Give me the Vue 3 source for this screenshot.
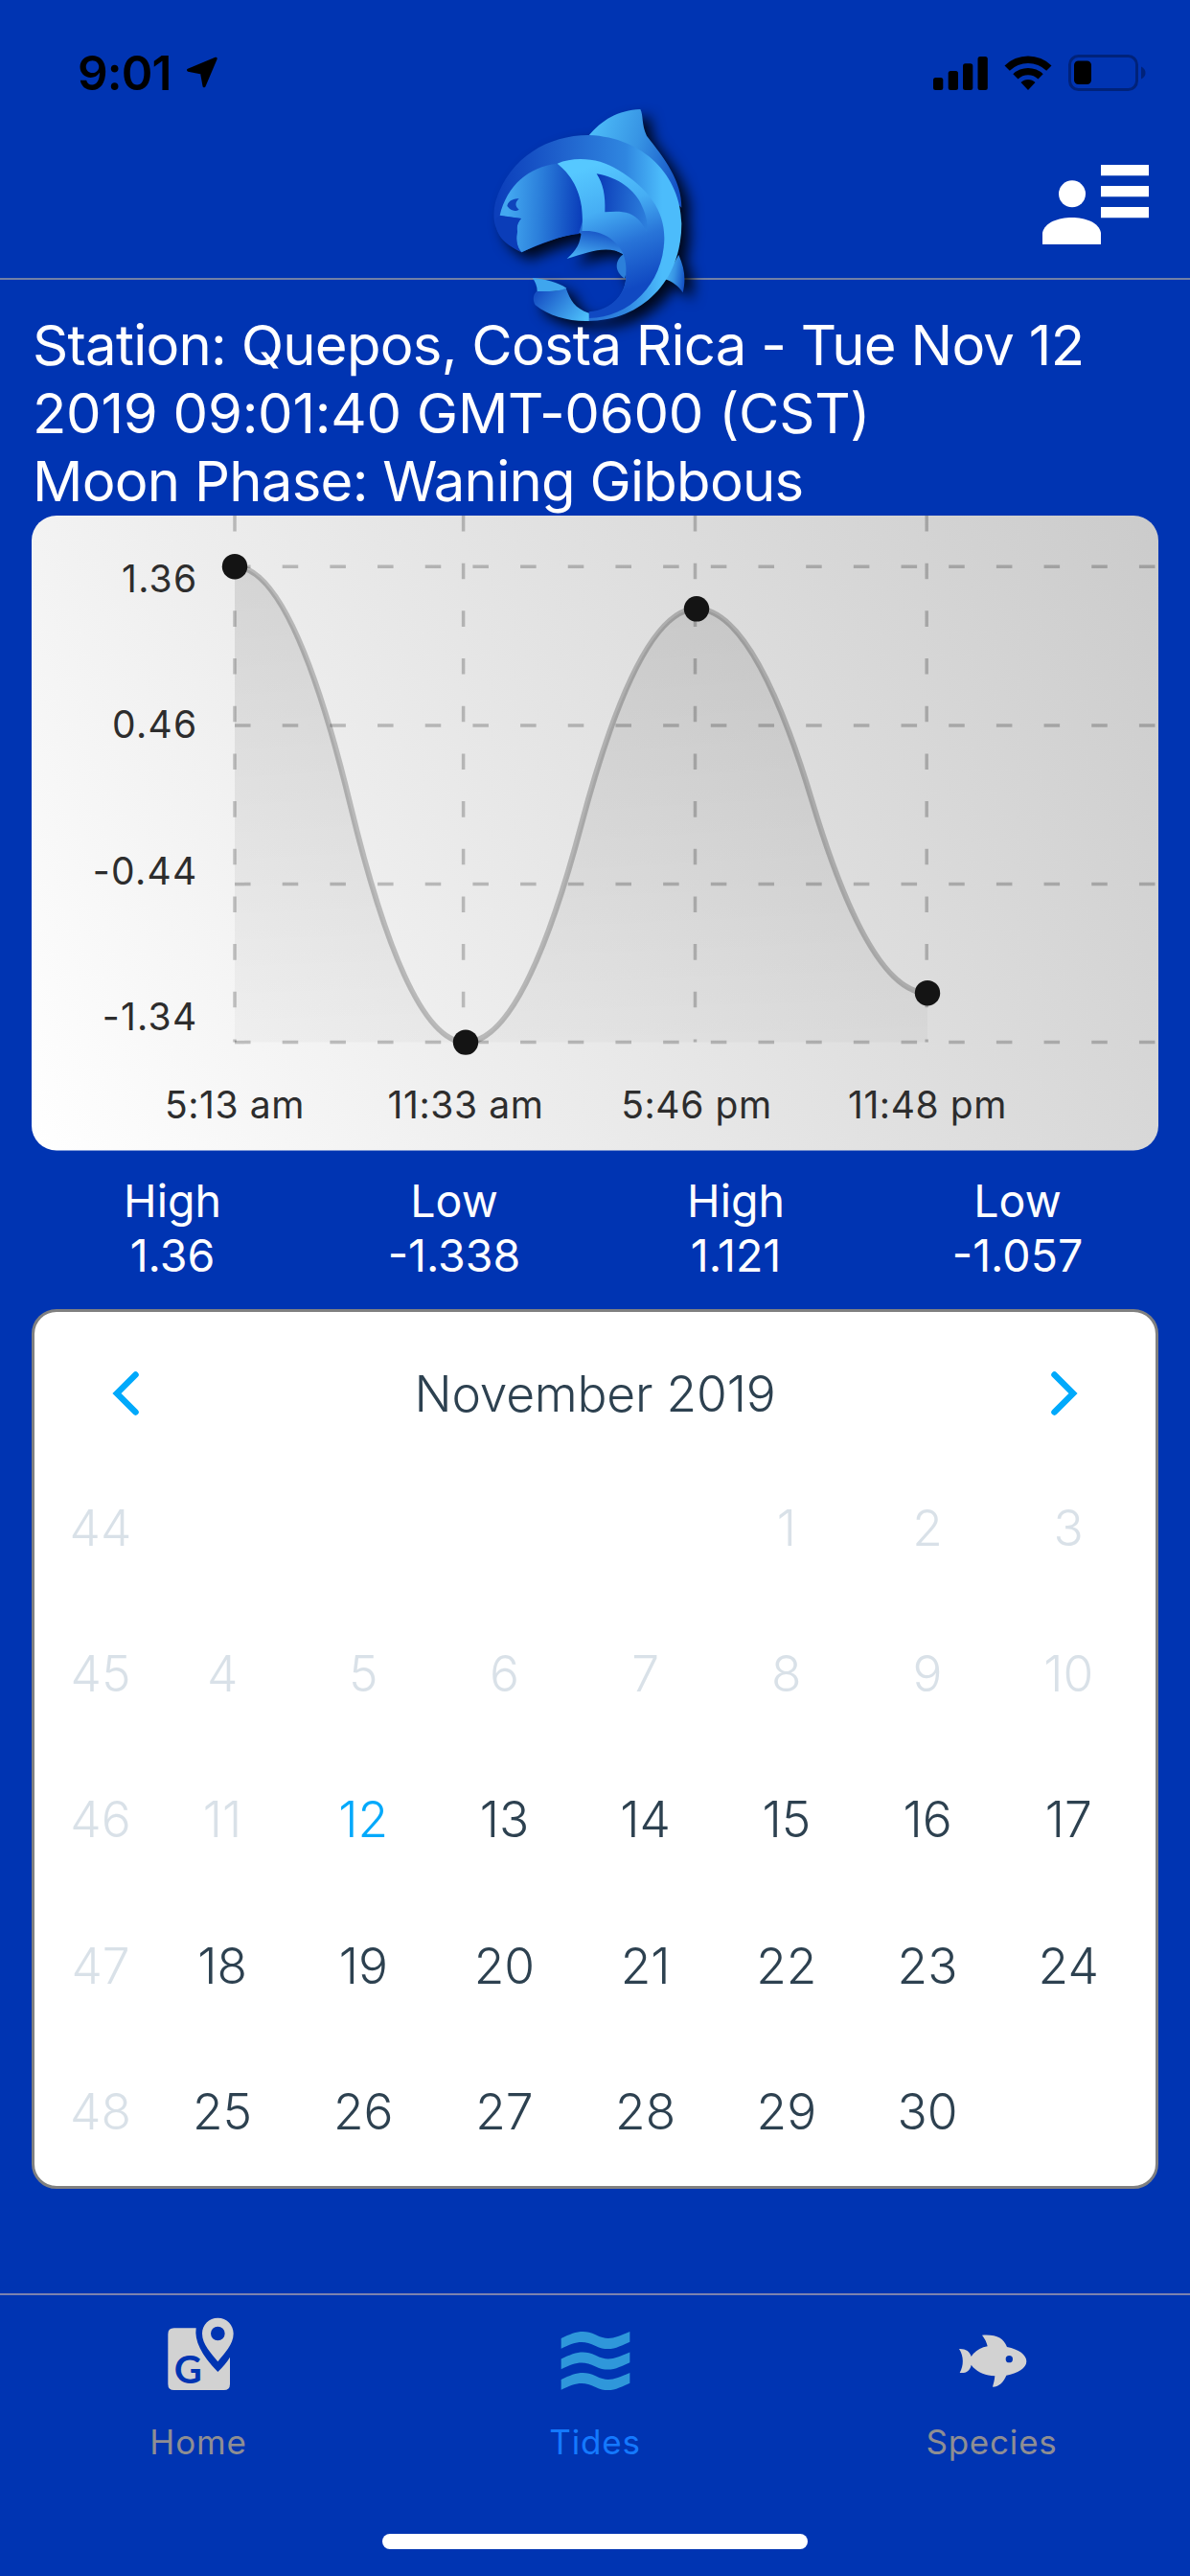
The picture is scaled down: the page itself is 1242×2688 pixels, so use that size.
<template>
  <div class="screen">
    <header class="header">
      <div class="status-bar">
        <div class="status-left">
          <span class="clock">9:01</span>
          <svg class="location" viewBox="0 0 34 34">
            <path d="M31.200 2.200 2.500 14.200l14 2.800 2.500 13.800Z" />
          </svg>
        </div>
        <div class="status-right">
          <svg class="signal" viewBox="0 0 57 35">
            <rect x="0" y="22" width="10.300" height="13" rx="2.500" />
            <rect x="15.700" y="15" width="10.300" height="20" rx="2.500" />
            <rect x="31" y="7.300" width="10.300" height="27.700" rx="2.500" />
            <rect x="46.500" y="0" width="10.300" height="35" rx="2.500" />
          </svg>
          <svg class="wifi" viewBox="0 0 50 37">
            <path d="M0.500 11.500a35 35 0 0 1 49 0l-5.300 5.300a27.500 27.500 0 0 0-38.400 0Z" />
            <path d="M9.300 20.300a22.500 22.500 0 0 1 31.400 0l-5.200 5.300a15 15 0 0 0-21 0Z" />
            <path d="M17.500 29a10.600 10.600 0 0 1 15 0L25 37Z" />
          </svg>
          <svg class="battery" viewBox="0 0 81 38">
            <rect x="1.500" y="1.500" width="70" height="35" rx="9" class="battery-case" />
            <rect x="6" y="6.500" width="18" height="24.500" rx="4.500" />
            <path d="M76 12.500c6 2.500 6 10.500 0 13Z" class="battery-cap" />
          </svg>
        </div>
      </div>
      <div class="nav-bar">
        <svg class="logo" viewBox="0 0 780 780">
          <defs>
            <linearGradient id="fin" x1="0" x2="1" y1="0.300" y2="0.600">
              <stop offset="0" stop-color="#4dbcf8" />
              <stop offset="0.500" stop-color="#3794e4" />
              <stop offset="1" stop-color="#1553c6" />
            </linearGradient>
            <linearGradient id="back" gradientUnits="userSpaceOnUse" x1="90" x2="660" y1="330" y2="330">
              <stop offset="0" stop-color="#0c3fbb" />
              <stop offset="0.350" stop-color="#1f62cd" />
              <stop offset="0.700" stop-color="#2f86e0" />
              <stop offset="0.900" stop-color="#4cbcfb" />
            </linearGradient>
            <linearGradient id="head" gradientUnits="userSpaceOnUse" x1="120" x2="352" y1="340" y2="350">
              <stop offset="0" stop-color="#43a8f0" />
              <stop offset="0.450" stop-color="#2a7dda" />
              <stop offset="1" stop-color="#0a3dba" />
            </linearGradient>
            <linearGradient id="body" gradientUnits="userSpaceOnUse" x1="380" x2="520" y1="220" y2="600">
              <stop offset="0" stop-color="#56c8ff" />
              <stop offset="0.350" stop-color="#46aef4" />
              <stop offset="0.650" stop-color="#2874d8" />
              <stop offset="1" stop-color="#1049c2" />
            </linearGradient>
            <linearGradient id="pectoral" x1="0" x2="1" y1="0.400" y2="0.500">
              <stop offset="0" stop-color="#0b3cb8" />
              <stop offset="1" stop-color="#2c7edc" />
            </linearGradient>
            <linearGradient id="tail" x1="0" x2="1" y1="0.300" y2="0.800">
              <stop offset="0" stop-color="#1650c4" />
              <stop offset="1" stop-color="#4dbffa" />
            </linearGradient>
            <linearGradient id="belly" x1="0.300" x2="0.700" y1="1" y2="0">
              <stop offset="0" stop-color="#48b0f4" />
              <stop offset="1" stop-color="#1550c4" />
            </linearGradient>
          </defs>
          <path fill="url(#fin)" d="M372 126C415 75 465 45 535 42C545 60 538 90 555 125C610 195 665 265 664 350C560 250 480 150 372 126Z" />
          <path fill="url(#fin)" d="M655 498C674 540 678 575 668 616C654 595 636 582 612 574Z" />
          <path fill="url(#back)" d="M163 490C85 450 65 400 82 330C125 190 250 122 375 123C545 130 662 250 664 400C664 580 540 705 370 705L374 680C450 670 490 620 490 565L480 495L345 430C285 438 220 465 163 490Z" />
          <path fill="url(#head)" d="M95 374C118 280 185 222 275 212C330 255 358 320 353 395L342 432C285 438 225 460 163 490C145 470 146 440 150 425C146 405 155 392 162 384Z" />
          <path fill="#0b3db8" d="M95 376L162 384C155 392 146 405 150 425C146 440 145 470 163 490C100 460 80 430 82 385Z" />
          <path fill="url(#body)" d="M275 212C330 188 410 195 465 232C560 290 612 360 610 450C606 590 500 695 374 696V676C450 670 492 615 490 560L480 495C460 450 410 422 352 425C362 330 335 260 275 212Z" />
          <path fill="url(#pectoral)" d="M398 244C465 255 520 295 540 345C552 370 560 400 555 427C545 405 530 380 500 368C475 360 450 362 424 364C426 310 418 275 398 244Z" />
          <path fill="url(#belly)" d="M350 424C410 418 462 450 482 496C430 466 375 490 305 510C335 485 348 460 350 424Z" />
          <path fill="#2c80da" d="M482 496C455 515 452 550 486 572C494 550 490 520 482 496Z" />
          <path fill="url(#tail)" d="M210 612C198 625 198 640 206 655C250 690 310 707 374 705V680C330 665 316 640 302 602C270 615 240 610 210 612Z" />
          <path fill="#3fa6ee" d="M197 570C235 572 280 585 304 602C285 612 245 612 212 612C212 596 206 582 197 570Z" />
          <path fill="#0f44bc" d="M155 322C135 320 120 332 118 345C130 362 145 362 155 356C142 346 142 334 155 322Z" />
        </svg>
        <svg class="contacts" viewBox="0 0 333 249">
          <circle cx="93" cy="91" r="42" />
          <path d="M0 249V212C8 180 50 165 92 165S176 180 183 212V249Z" />
          <path d="M183 0h150v34H183zM183 66h150v34H183zM183 132h150v34H183z" />
        </svg>
      </div>
    </header>

    <main class="content">
      <div class="info">
        <div class="info-line">Station: Quepos, Costa Rica - Tue Nov 12</div>
        <div class="info-line wide">2019 09:01:40 GMT-0600 (CST)</div>
        <div class="info-line">Moon Phase: Waning Gibbous</div>
      </div>

      <svg class="chart" viewBox="0 0 1176 662.500">
        <defs>
          <linearGradient id="chartBg" gradientUnits="userSpaceOnUse" x1="0" y1="662" x2="1176" y2="0">
            <stop offset="0" stop-color="#ffffff" />
            <stop offset="1" stop-color="#cbcbcb" />
          </linearGradient>
          <linearGradient id="chartArea" gradientUnits="userSpaceOnUse" x1="0" y1="0" x2="0" y2="662">
            <stop offset="0" stop-color="#000" stop-opacity="0.110" />
            <stop offset="1" stop-color="#000" stop-opacity="0.010" />
          </linearGradient>
        </defs>
        <rect width="1176" height="662.500" rx="26" fill="url(#chartBg)" />
        <line v-for="y in gridY" :key="'h' + y" class="grid" x1="212" :y1="y" x2="1176" :y2="y" />
        <line v-for="x in gridX" :key="'v' + x" class="grid" :x1="x" y1="0" :x2="x" y2="549.600" />
        <path :d="areaPath" fill="url(#chartArea)" />
        <path :d="curvePath" class="curve" />
        <circle v-for="p in tides" :key="p.time" :cx="p.x" :cy="p.y" r="13.200" class="dot" />
        <text v-for="l in yLabels" :key="l.text" class="label value" x="173.500" :y="l.y" text-anchor="end">{{ l.text }}</text>
        <text v-for="p in tides" :key="'t' + p.time" class="label" :x="p.x" y="629" text-anchor="middle">{{ p.time }}</text>
      </svg>

      <div class="tide-row">
        <div v-for="p in tides" :key="p.time" class="tide">
          <div>{{ p.type }}</div>
          <div>{{ p.height }}</div>
        </div>
      </div>

      <section class="calendar">
        <div class="month">
          <svg class="arrow" viewBox="0 0 28 46"><path d="M24.500 3.500 5 23l19.500 19.500" /></svg>
          <span class="month-name">November 2019</span>
          <svg class="arrow" viewBox="0 0 28 46"><path d="M3.500 3.500 23 23 3.500 42.500" /></svg>
        </div>
        <div v-for="w in weeks" :key="w.number" class="week">
          <span class="day disabled">{{ w.number }}</span>
          <span
            v-for="(d, i) in w.days"
            :key="i"
            class="day"
            :class="{ disabled: d < today, today: d === today }"
          >{{ d }}</span>
        </div>
      </section>
    </main>

    <nav class="tab-bar">
      <div class="tab">
        <svg class="tab-icon" viewBox="201 140 240 240">
          <path fill="#d2d2d2" d="M245 177H314C308 215 330 262 382 314C398 298 410 284 420 268V352Q420 371 401 371H245Q226 371 226 352V196Q226 177 245 177Z" />
          <path fill="#d2d2d2" fill-rule="evenodd" d="M382 145C410 145 431 167 431 194C431 228 402 256 382 282C362 256 333 228 333 194C333 167 354 145 382 145ZM382 172A22 22 0 1 0 382 216A22 22 0 1 0 382 172Z" />
          <text x="289" y="349" text-anchor="middle" class="g-mark">G</text>
        </svg>
        <span class="tab-label">Home</span>
      </div>
      <div class="tab active">
        <svg class="tab-icon" viewBox="183 140 240 240">
          <path
            v-for="y in [0, 64.500, 129]"
            :key="y"
            :transform="`translate(0 ${y})`"
            fill="#2f97da"
            d="M197 209C240 188 268 180 305 198C345 218 365 208 412 188V220C380 233 350 255 305 233C265 212 240 220 197 241Z"
          />
        </svg>
        <span class="tab-label">Tides</span>
      </div>
      <div class="tab">
        <svg class="tab-icon" viewBox="165 140 240 240">
          <path
            fill="#d2d2d2"
            fill-rule="evenodd"
            d="M183 242C203 241 217 250 221 266C233 248 250 238 272 234C270 222 263 209 255 199C300 196 322 208 333 236C370 243 394 261 394 281C394 303 366 319 331 325C322 345 310 360 288 361C291 350 294 340 295 327C262 325 235 312 221 292C218 310 205 319 185 317C198 294 198 264 183 242ZM340 263A11 11 0 1 0 340 285A11 11 0 1 0 340 263Z"
          />
        </svg>
        <span class="tab-label">Species</span>
      </div>
      <div class="home-indicator"></div>
    </nav>
  </div>
</template>

<script setup>
import { computed } from 'vue'

const today = 12

const tides = [
  { type: 'High', height: '1.36', time: '5:13 am', x: 212, y: 53.2 },
  { type: 'Low', height: '-1.338', time: '11:33 am', x: 453, y: 549.6 },
  { type: 'High', height: '1.121', time: '5:46 pm', x: 694, y: 97.3 },
  { type: 'Low', height: '-1.057', time: '11:48 pm', x: 935, y: 498.2 }
]

const gridX = [212, 450.6, 692.5, 934.2]
const gridY = [53.2, 219, 384.6, 549.6]
const yLabels = [
  { text: '1.36', y: 80 },
  { text: '0.46', y: 232.2 },
  { text: '-0.44', y: 384.7 },
  { text: '-1.34', y: 536.7 }
]

const weeks = [
  { number: 44, days: [null, null, null, null, 1, 2, 3] },
  { number: 45, days: [4, 5, 6, 7, 8, 9, 10] },
  { number: 46, days: [11, 12, 13, 14, 15, 16, 17] },
  { number: 47, days: [18, 19, 20, 21, 22, 23, 24] },
  { number: 48, days: [25, 26, 27, 28, 29, 30, null] }
]

// two quadratic segments between every pair of points
const curvePath = computed(() => {
  let d = `M${tides[0].x} ${tides[0].y}`
  for (let i = 0; i < tides.length - 1; i++) {
    const a = tides[i]
    const b = tides[i + 1]
    const mx = (a.x + b.x) / 2
    const my = (a.y + b.y) / 2
    d += ` Q${(mx + a.x) / 2} ${a.y} ${mx} ${my}`
    d += ` Q${(mx + b.x) / 2} ${b.y} ${b.x} ${b.y}`
  }
  return d
})
const areaPath = computed(() => `${curvePath.value} L935 549.6 L212 549.6 Z`)
</script>

<style>
body {
  margin: 0;
  background: #0034b2;
}
</style>

<style scoped>
.screen {
  display: flex;
  flex-direction: column;
  box-sizing: border-box;
  width: 1242px;
  height: 2688px;
  overflow: hidden;
  background: #0034b2;
  font-family: Inter, "Liberation Sans", sans-serif;
  color: #fff;
}
.screen svg {
  display: block;
  flex: none;
}
.header {
  box-sizing: border-box;
  height: 292px;
  border-bottom: 2px solid #7180a6;
}
.status-bar {
  display: flex;
  justify-content: space-between;
  box-sizing: border-box;
  height: 132px;
  padding: 57px 46px 0 81px;
  color: #000;
}
.status-left {
  display: flex;
  justify-content: space-between;
  width: 147px;
  height: 38px;
}
.clock {
  font-size: 49.5px;
  line-height: 38px;
  font-weight: 600;
  letter-spacing: -0.9px;
}
.location {
  width: 34px;
  height: 34px;
  margin-top: 2px;
  stroke: #000;
  stroke-width: 3;
  stroke-linejoin: round;
}
.status-right {
  display: flex;
}
.signal {
  width: 57px;
  height: 35px;
  margin: 1.5px 17px 0 0;
}
.wifi {
  width: 50px;
  height: 37px;
  margin-right: 17px;
}
.battery {
  width: 81px;
  height: 38px;
}
.battery-case {
  fill: none;
  stroke: #00227a;
  stroke-width: 3;
}
.battery-cap {
  fill: #00227a;
}
.nav-bar {
  position: relative;
  display: flex;
  justify-content: flex-end;
  padding: 40px 43.5px 0 0;
}
.logo {
  position: absolute;
  left: 490px;
  top: -32px;
  width: 260px;
  height: 260px;
  overflow: visible;
  filter: drop-shadow(9px 8px 7px rgba(0, 0, 0, 0.85));
}
.contacts {
  width: 111px;
  height: 83px;
  fill: #fff;
}
.content {
  display: flex;
  flex-direction: column;
  padding: 33px 33px 0;
}
.info {
  position: relative;
  height: 213px;
  padding-left: 1px;
  font-size: 58px;
  line-height: 71.2px;
  white-space: nowrap;
}
.info-line {
  letter-spacing: -0.72px;
}
.info-line.wide {
  letter-spacing: -0.25px;
}
.chart {
  width: 1176px;
  height: 662.5px;
}
.grid {
  stroke: #000;
  stroke-opacity: 0.22;
  stroke-width: 3.5;
  stroke-dasharray: 16.56 33.12;
}
.curve {
  fill: none;
  stroke: #000;
  stroke-opacity: 0.22;
  stroke-width: 6;
}
.dot {
  fill: #141414;
}
.label {
  font-size: 39px;
  letter-spacing: 0.6px;
  fill: #2d2d2d;
}
.label.value {
  letter-spacing: 1.3px;
}
.tide-row {
  display: flex;
  height: 114.5px;
  padding: 24px 0 27px;
}
.tide {
  flex: 1;
  font-size: 46.5px;
  line-height: 57.3px;
  text-align: center;
}
.calendar {
  box-sizing: border-box;
  height: 918px;
  padding-top: 20px;
  border: 3px solid #808080;
  border-radius: 26px;
  background: #fff;
  color: #2d4150;
}
.month {
  display: flex;
  align-items: center;
  justify-content: space-between;
  height: 129px;
  padding: 0 81px;
}
.month-name {
  font-size: 51.5px;
  font-weight: 300;
  letter-spacing: -0.2px;
}
.arrow {
  width: 28px;
  height: 46px;
  fill: none;
  stroke: #00a9fb;
  stroke-width: 6.5;
  stroke-linecap: round;
}
.week {
  display: grid;
  grid-template-columns: 107px repeat(7, 147.2px);
  align-items: center;
  height: 152.2px;
  padding-left: 15.5px;
}
.day {
  font-size: 51.5px;
  font-weight: 300;
  text-align: center;
}
.day.disabled {
  color: #d9e1e8;
}
.day.today {
  color: #00a9fb;
}
.tab-bar {
  position: relative;
  display: flex;
  box-sizing: border-box;
  height: 295px;
  margin-top: auto;
  padding-top: 22px;
  border-top: 2px solid #7c82ae;
}
.tab {
  flex: 1;
  display: flex;
  flex-direction: column;
  align-items: center;
  gap: 30px;
  color: #8e8e93;
}
.tab.active {
  color: #1479ff;
}
.tab-icon {
  width: 80px;
  height: 80px;
}
.g-mark {
  font-family: Lato, sans-serif;
  font-size: 120px;
  font-weight: 700;
  fill: #0034b2;
}
.tab-label {
  font-size: 35px;
  line-height: 42px;
  letter-spacing: 0.8px;
}
.home-indicator {
  position: absolute;
  left: 399px;
  bottom: 28px;
  width: 444px;
  height: 16px;
  border-radius: 8px;
  background: #fff;
}
</style>
